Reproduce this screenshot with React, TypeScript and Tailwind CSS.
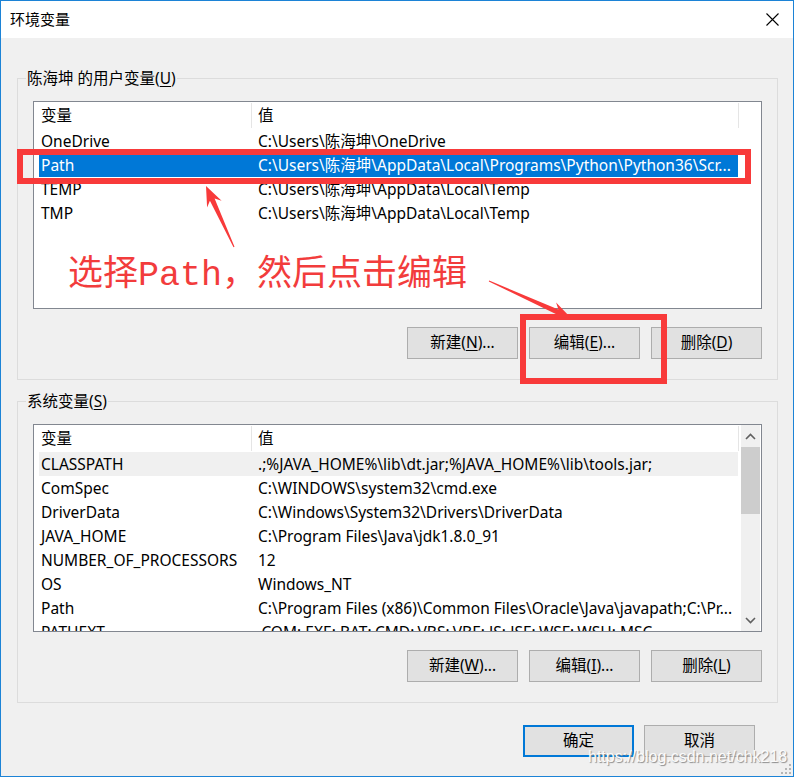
import React from "react";

type Pt = [number, number];

function arrowPoints(tail: Pt, tip: Pt, headLen: number, headHalf: number, neckLen: number, neckHalf: number, tailHalf: number): string {
  const dx = tail[0] - tip[0];
  const dy = tail[1] - tip[1];
  const len = Math.hypot(dx, dy);
  const ux = dx / len;
  const uy = dy / len;
  const px = -uy;
  const py = ux;
  const at = (d: number, w: number): Pt => [tip[0] + ux * d + px * w, tip[1] + uy * d + py * w];
  const pts: Pt[] = [
    tip,
    at(headLen, headHalf),
    at(neckLen, neckHalf),
    [tail[0] + px * tailHalf, tail[1] + py * tailHalf],
    [tail[0] - px * tailHalf, tail[1] - py * tailHalf],
    at(neckLen, -neckHalf),
    at(headLen, -headHalf),
  ];
  return pts.map((p) => `${p[0].toFixed(1)},${p[1].toFixed(1)}`).join(" ");
}

const UI_FONT = "font-['Noto_Sans','Noto_Sans_CJK_SC',sans-serif]";

function Btn({ label, keyChar, suffix, focused }: { label: string; keyChar?: string; suffix?: string; focused?: boolean }) {
  return (
    <div
      className={
        "w-[111px] h-[32px] flex items-center justify-center bg-[#e1e1e1] text-[15.5px] text-black " +
        (focused ? "border-2 border-[#0078d7]" : "border border-[#adadad]")
      }
    >
      <span>
        {label}
        {keyChar ? (
          <>
            (<span className="underline underline-offset-2">{keyChar}</span>)
          </>
        ) : null}
        {suffix}
      </span>
    </div>
  );
}

function Header({ withScroll }: { withScroll?: boolean }) {
  return (
    <div className="h-[27px] flex shrink-0 text-[15.5px]">
      <div className="w-[217px] pl-[7px] pt-[1px] flex items-center">变量</div>
      <div className="w-px my-[1px] bg-[#e5e5e5]" />
      <div className="w-[486px] pl-[6px] pt-[1px] flex items-center">值</div>
      <div className="w-px my-[1px] bg-[#e5e5e5]" />
      {withScroll ? null : <div className="flex-1" />}
    </div>
  );
}

function Row({ name, value, variant }: { name: string; value: string; variant?: "sel" | "gray" }) {
  const cls =
    variant === "sel"
      ? "bg-[#0078d7] text-white"
      : variant === "gray"
      ? "bg-[#f0f0f0] text-black"
      : "text-black";
  return (
    <div className={"ml-[5px] w-[699px] h-[24px] shrink-0 flex items-center text-[15.5px] leading-[22px] whitespace-nowrap " + cls}>
      <div className="w-[212px] pl-[2px] overflow-hidden">{name}</div>
      <div className="flex-1 pl-[7px] overflow-hidden">{value}</div>
    </div>
  );
}

function GroupBox({ title, keyChar, children }: { title: string; keyChar: string; children: React.ReactNode }) {
  return (
    <div className="relative w-[761px] h-[302px] border border-[#dcdcdc] pt-[22px] px-[15px] flex flex-col">
      <div className="absolute left-[8px] -top-[11px] px-[1px] bg-[#f0f0f0] text-[15.5px] leading-[20px] text-black">
        {title}(<span className="underline underline-offset-2">{keyChar}</span>)
      </div>
      {children}
    </div>
  );
}

function Chevron({ up }: { up?: boolean }) {
  return (
    <svg width="11" height="7" viewBox="0 0 11 7">
      <path d={up ? "M1 6 L5.5 1.5 L10 6" : "M1 1 L5.5 5.5 L10 1"} fill="none" stroke="#606060" strokeWidth="1.6" />
    </svg>
  );
}

export default function App() {
  const red = "#f83a3a";
  return (
    <div className={"relative w-[794px] h-[777px] border border-[#1c83d6] bg-[#f0f0f0] flex flex-col overflow-hidden text-black " + UI_FONT}>
      {/* title bar */}
      <div className="h-[37px] shrink-0 bg-white flex items-center justify-between pl-[9px] pr-[14px]">
        <span className="text-[15px] leading-[20px] pb-[1px]">环境变量</span>
        <svg width="13" height="13" viewBox="0 0 13 13">
          <path d="M0.5 0.5 L12.5 12.5 M12.5 0.5 L0.5 12.5" stroke="#000" strokeWidth="1.1" />
        </svg>
      </div>

      <div className="flex-1 flex flex-col pl-[16px] pt-[40px]">
        <GroupBox title="陈海坤 的用户变量" keyChar="U">
          <div className="w-[729px] h-[208px] shrink-0 border border-[#828790] bg-white flex flex-col overflow-hidden">
            <Header />
            <Row name="OneDrive" value="C:\Users\陈海坤\OneDrive" />
            <Row name="Path" value="C:\Users\陈海坤\AppData\Local\Programs\Python\Python36\Scr..." variant="sel" />
            <Row name="TEMP" value="C:\Users\陈海坤\AppData\Local\Temp" />
            <Row name="TMP" value="C:\Users\陈海坤\AppData\Local\Temp" />
          </div>
          <div className="mt-[18px] flex justify-end gap-[11px]">
            <Btn label="新建" keyChar="N" suffix="..." />
            <Btn label="编辑" keyChar="E" suffix="..." />
            <Btn label="删除" keyChar="D" />
          </div>
        </GroupBox>

        <div className="mt-[21px]">
          <GroupBox title="系统变量" keyChar="S">
            <div className="w-[729px] h-[208px] shrink-0 border border-[#828790] bg-white flex overflow-hidden">
              <div className="w-[706px] flex flex-col overflow-hidden">
                <Header withScroll />
                <Row name="CLASSPATH" value=".;%JAVA_HOME%\lib\dt.jar;%JAVA_HOME%\lib\tools.jar;" variant="gray" />
                <Row name="ComSpec" value="C:\WINDOWS\system32\cmd.exe" />
                <Row name="DriverData" value="C:\Windows\System32\Drivers\DriverData" />
                <Row name="JAVA_HOME" value="C:\Program Files\Java\jdk1.8.0_91" />
                <Row name="NUMBER_OF_PROCESSORS" value="12" />
                <Row name="OS" value="Windows_NT" />
                <Row name="Path" value="C:\Program Files (x86)\Common Files\Oracle\Java\javapath;C:\Pr..." />
                <Row name="PATHEXT" value=".COM;.EXE;.BAT;.CMD;.VBS;.VBE;.JS;.JSE;.WSF;.WSH;.MSC" />
              </div>
              <div className="w-[19px] ml-[1px] bg-[#f0f0f0] flex flex-col items-center">
                <div className="h-[22px] flex items-center justify-center">
                  <Chevron up />
                </div>
                <div className="w-full h-[67px] bg-[#cdcdcd]" />
                <div className="flex-1" />
                <div className="h-[22px] flex items-center justify-center">
                  <Chevron />
                </div>
              </div>
            </div>
            <div className="mt-[18px] flex justify-end gap-[11px]">
              <Btn label="新建" keyChar="W" suffix="..." />
              <Btn label="编辑" keyChar="I" suffix="..." />
              <Btn label="删除" keyChar="L" />
            </div>
          </GroupBox>
        </div>

        <div className="mt-[22px] flex justify-end gap-[10px] pr-[38px]">
          <Btn label="确定" focused />
          <Btn label="取消" />
        </div>
      </div>

      {/* annotation overlays */}
      <div className="absolute left-[16px] top-[148px] w-[734px] h-[35px] border-[6px] border-[#f83a3a]" />
      <div className="absolute left-[519px] top-[313px] w-[147px] h-[70px] border-[6px] border-[#f83a3a]" />
      <svg className="absolute left-0 top-0" width="794" height="777" viewBox="-1 -1 794 777">
        <polygon points={arrowPoints([232, 245], [204, 184], 20, 8, 15, 2.6, 0.6)} fill={red} />
        <polygon points={arrowPoints([487, 279], [569, 316], 20, 8, 15, 2.6, 0.6)} fill={red} />
      </svg>
      <div className="absolute left-[67px] top-[245px] text-[35px] leading-[48px] text-[#f23c3c] font-['Noto_Sans_CJK_SC',serif] whitespace-nowrap">
        选择<span className="font-['Liberation_Mono',monospace]">Path</span>，然后点击编辑
      </div>

      {/* watermark */}
      <div className="absolute left-[587px] top-[746px] text-[16px] leading-[20px] font-['Liberation_Sans',Arial,sans-serif] text-[#fbfbfb] [text-shadow:1px_1px_1px_#8a8a8a] whitespace-nowrap">
        https://blog.csdn.net/chk218
      </div>
      {/* resize grip */}
      <svg className="absolute right-[2px] bottom-[2px]" width="10" height="10" viewBox="0 0 10 10">
        <rect x="8" y="0" width="2" height="2" fill="#b5b5b5" />
        <rect x="4" y="4" width="2" height="2" fill="#b5b5b5" />
        <rect x="8" y="4" width="2" height="2" fill="#b5b5b5" />
        <rect x="0" y="8" width="2" height="2" fill="#b5b5b5" />
        <rect x="4" y="8" width="2" height="2" fill="#b5b5b5" />
        <rect x="8" y="8" width="2" height="2" fill="#b5b5b5" />
      </svg>
    </div>
  );
}
